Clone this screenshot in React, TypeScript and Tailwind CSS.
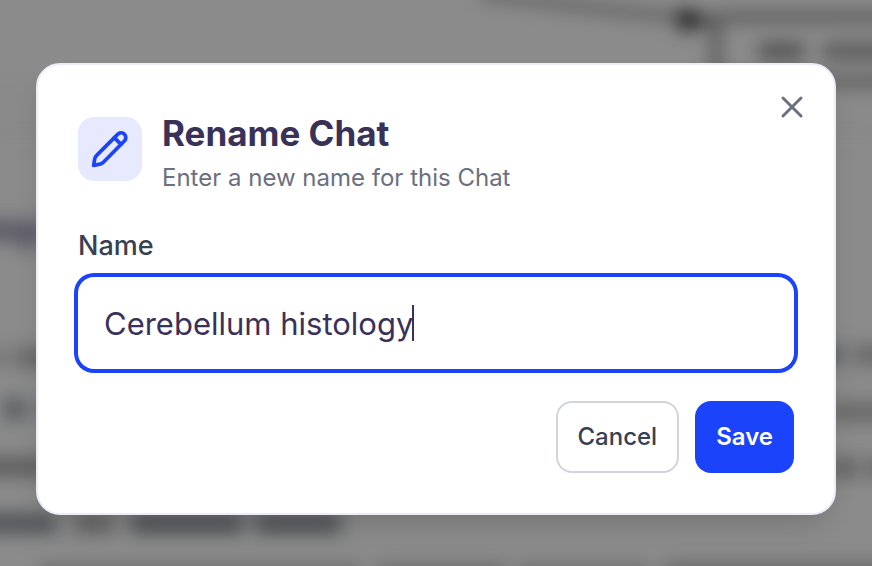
import { useState, type FormEvent } from "react";
import { X } from "lucide-react";

// Blurred words of the conversation that shows behind the dialog.
const SMUDGES = [
  { x: -20, y: 221, w: 64, h: 19, fill: "#595765" },
  { x: 14, y: 232, w: 28, h: 16, fill: "#615f6c" },
  { x: -20, y: 350, w: 28, h: 14, fill: "#6e6e6e" },
  { x: 16, y: 349, w: 40, h: 17, fill: "#606060" },
  { x: 4, y: 398, w: 20, h: 22, fill: "#54585d" },
  { x: 32, y: 402, w: 18, h: 14, fill: "#6e6e6e" },
  { x: -20, y: 458, w: 70, h: 18, fill: "#5a5a5a" },
  { x: -20, y: 514, w: 76, h: 19, fill: "#4c4f53" },
  { x: 74, y: 514, w: 40, h: 19, fill: "#626262" },
  { x: 131, y: 514, w: 112, h: 19, fill: "#4c4f53" },
  { x: 255, y: 514, w: 86, h: 19, fill: "#4c4f53" },
  { x: 820, y: 346, w: 24, h: 18, fill: "#5a5d61" },
  { x: 854, y: 346, w: 40, h: 18, fill: "#646464" },
  { x: 830, y: 403, w: 70, h: 18, fill: "#646464" },
  { x: 830, y: 459, w: 28, h: 18, fill: "#5e5e5e" },
  { x: 866, y: 459, w: 30, h: 18, fill: "#646464" },
  { x: 759, y: 43, w: 45, h: 16, fill: "#4e4e4e" },
  { x: 823, y: 43, w: 70, h: 16, fill: "#585858" },
  { x: 40, y: 566, w: 320, h: 12, fill: "#626262" },
  { x: 376, y: 565, w: 130, h: 12, fill: "#626262" },
  { x: 518, y: 566, w: 130, h: 12, fill: "#626262" },
  { x: 664, y: 564, w: 230, h: 12, fill: "#5e5e5e" },
];

function Backdrop() {
  return (
    <svg
      aria-hidden="true"
      className="absolute inset-0 h-full w-full"
      viewBox="0 0 872 566"
      preserveAspectRatio="xMidYMid slice"
    >
      <defs>
        <filter
          id="soft"
          filterUnits="userSpaceOnUse"
          x="-40"
          y="-40"
          width="960"
          height="660"
          colorInterpolationFilters="sRGB"
        >
          <feGaussianBlur stdDeviation="9" />
        </filter>
      </defs>
      <rect width="872" height="566" fill="#8b8b8b" />
      <g filter="url(#soft)">
        {SMUDGES.map(({ x, y, w, h, fill }) => (
          <rect key={`${x}-${y}`} x={x} y={y} width={w} height={h} fill={fill} />
        ))}
        {/* Diagram arrow and the box it points to */}
        <path d="M480 -6 L610 10 L684 18" fill="none" stroke="#505050" strokeWidth="7" />
        <path d="M678 8 L716 20 L680 32 Z" fill="#181818" />
        <path d="M900 17 H722 Q716 17 716 26 V81 H900" fill="none" stroke="#484848" strokeWidth="8" />
        <path d="M-20 95 H890 M-20 131 H890" stroke="#808080" strokeWidth="3" />
      </g>
    </svg>
  );
}

function PencilIcon() {
  return (
    <svg
      aria-hidden="true"
      className="size-10"
      viewBox="0 0 24 24"
      fill="none"
      stroke="currentColor"
      strokeWidth="2.2"
      strokeLinecap="round"
      strokeLinejoin="round"
    >
      <path d="M16.9 2.9a2.85 2.85 0 0 1 4 4L8.2 19.8Q7.2 20.8 5.9 21.1L2.2 21.8L2.8 18Q3 16.7 4 15.8Z" />
      <path d="M14.6 5.2l4 4" />
    </svg>
  );
}

export default function App() {
  const [name, setName] = useState("Cerebellum histology");
  const [focused, setFocused] = useState(false);

  const handleSubmit = (event: FormEvent) => {
    event.preventDefault();
  };

  return (
    <main className="relative flex min-h-screen items-center justify-center overflow-hidden bg-[#8b8b8b] px-9 pt-3 font-['Inter',sans-serif]">
      <Backdrop />

      <form
        role="dialog"
        aria-labelledby="rename-title"
        onSubmit={handleSubmit}
        className="relative w-full max-w-[800px] rounded-3xl border-2 border-[#eeebfb] bg-white p-10 shadow-[0_16px_32px_-12px_rgba(0,0,0,0.2)]"
      >
        <button
          type="button"
          aria-label="Close"
          className="absolute top-6 right-6 text-[#6b7080]"
        >
          <X className="size-9" strokeWidth={2} />
        </button>

        {/* Header */}
        <div className="flex items-start gap-5">
          <div className="mt-3 flex size-16 shrink-0 items-center justify-center rounded-2xl bg-[#e7eafe] text-[#1b43fa]">
            <PencilIcon />
          </div>
          <div>
            <h1 id="rename-title" className="text-[35px] leading-14 font-bold text-[#3a3159]">
              Rename Chat
            </h1>
            <p className="text-2xl leading-[34px] text-[#6b7080]">
              Enter a new name for this Chat
            </p>
          </div>
        </div>

        {/* Name field */}
        <label
          htmlFor="chat-name"
          className="mt-9 block text-[27px] leading-[30px] font-medium text-[#374151]"
        >
          Name
        </label>
        <div className="relative mt-4">
          <input
            id="chat-name"
            type="text"
            value={name}
            onChange={(event) => setName(event.target.value)}
            onFocus={() => setFocused(true)}
            onBlur={() => setFocused(false)}
            className="h-23 w-full rounded-2xl bg-white px-[26px] text-[31px] text-[#3a3159] ring-4 ring-[#1b43fa] outline-none"
          />
          {!focused && (
            <span
              aria-hidden="true"
              className="absolute top-7 left-[334px] h-9 w-0.5 bg-[#3a3159]"
            />
          )}
        </div>

        {/* Actions */}
        <div className="mt-8 flex justify-end gap-4">
          <button
            type="button"
            className="h-18 rounded-2xl border-2 border-[#d1d5db] bg-white px-5 text-2xl font-medium text-[#374151]"
          >
            Cancel
          </button>
          <button
            type="submit"
            className="h-18 rounded-2xl bg-[#1b43fa] px-[21px] text-2xl font-semibold text-white"
          >
            Save
          </button>
        </div>
      </form>
    </main>
  );
}
